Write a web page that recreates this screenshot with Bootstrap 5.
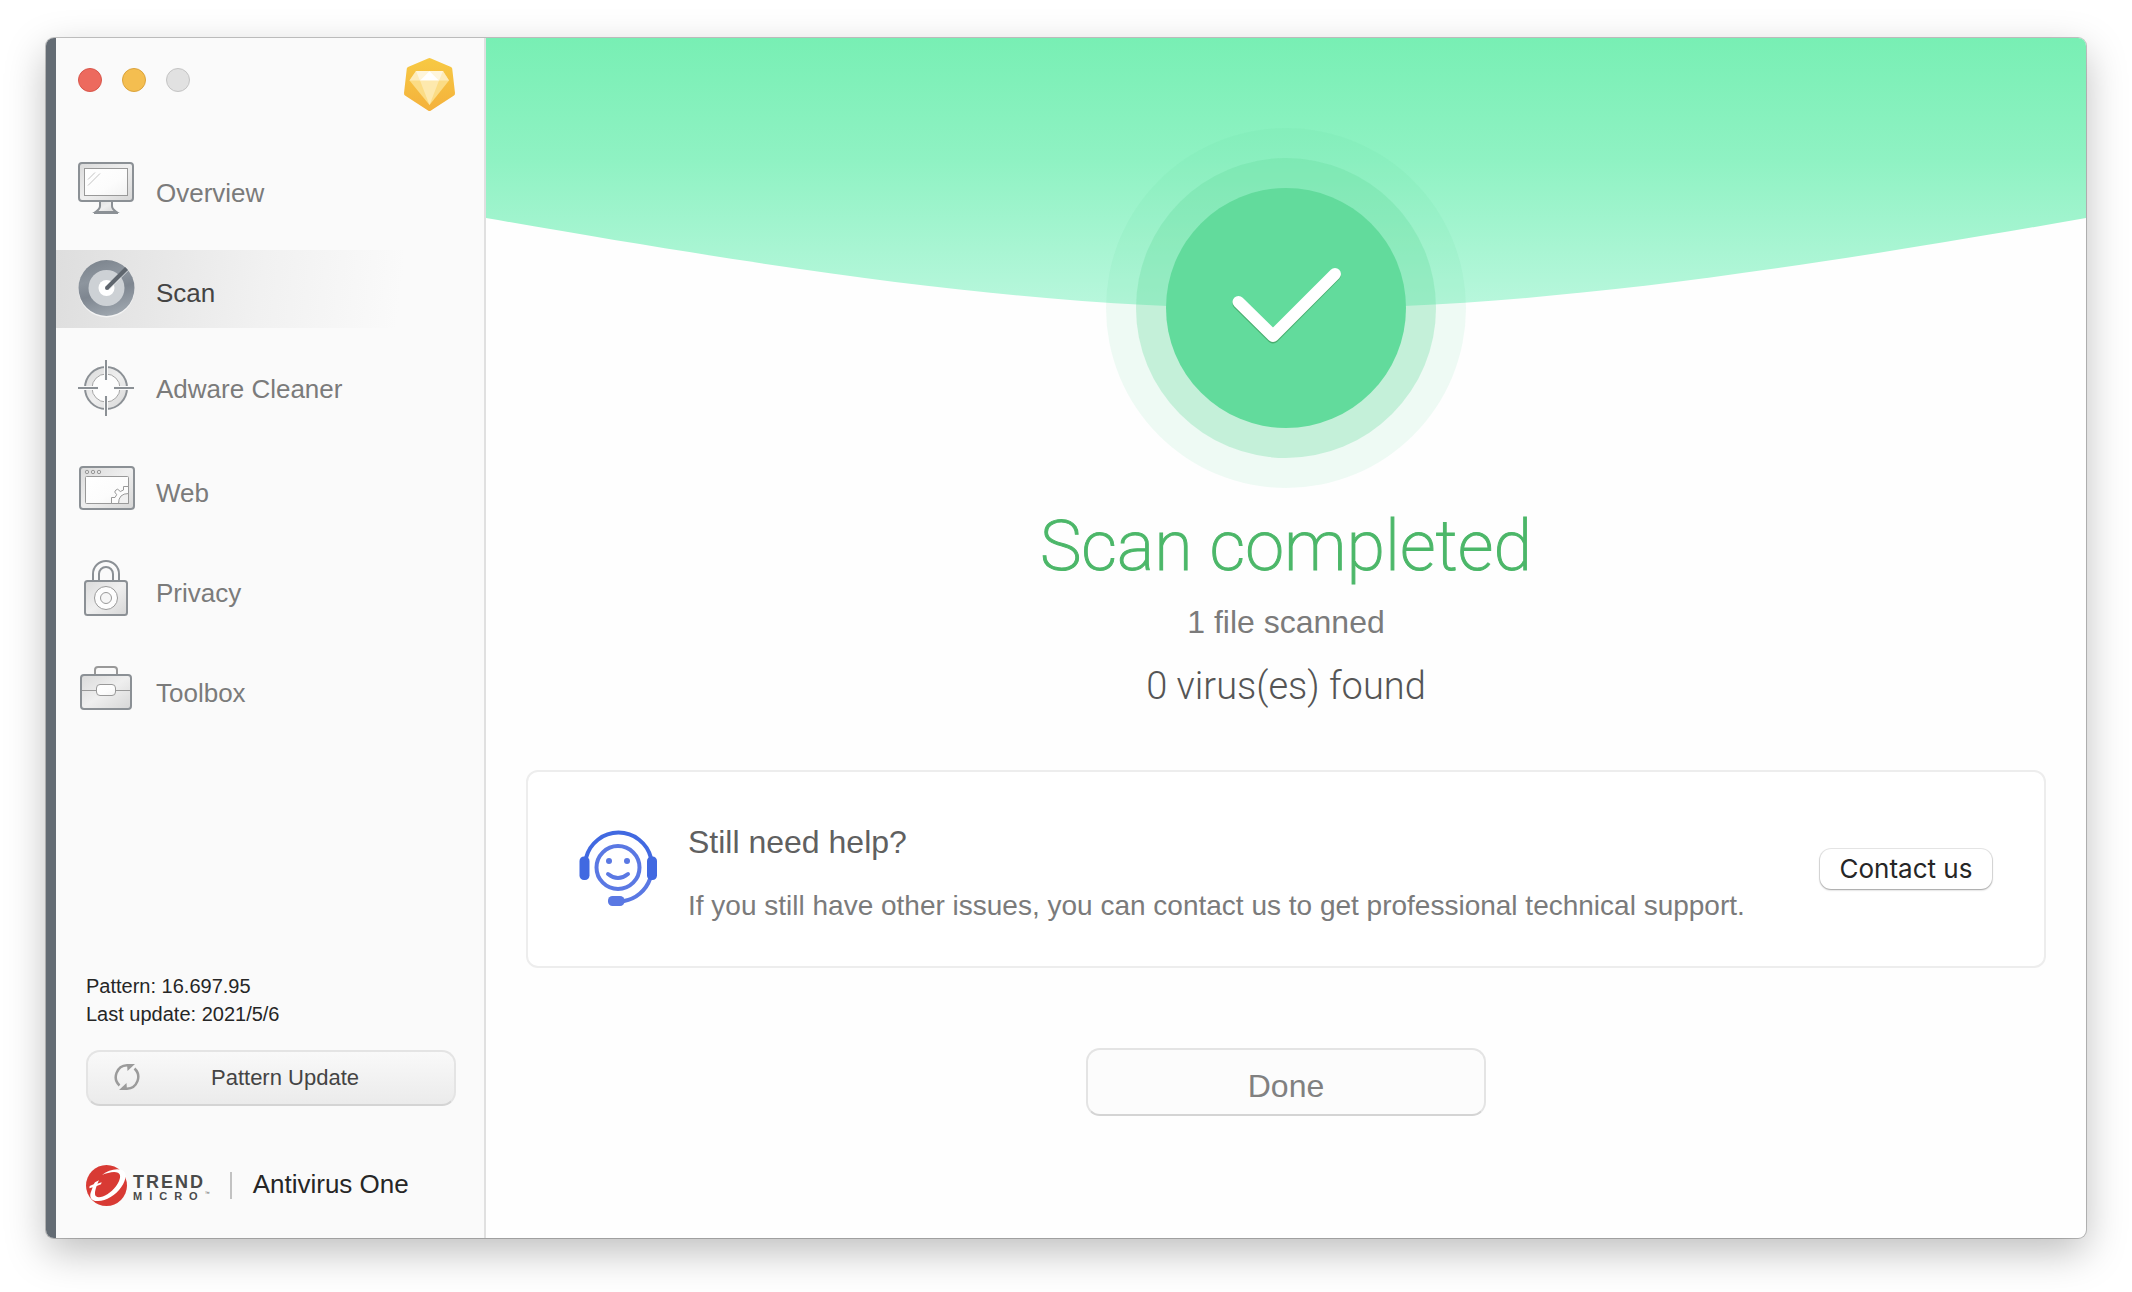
<!DOCTYPE html>
<html lang="en">
<head>
<meta charset="utf-8">
<meta name="viewport" content="width=device-width, initial-scale=1">
<title>Antivirus One</title>
<link href="https://cdn.jsdelivr.net/npm/bootstrap@5.3.0/dist/css/bootstrap.min.css" rel="stylesheet">
<style>
  body { font-family: "Liberation Sans", Arial, sans-serif; background: #fff; padding: 38px 46px 54px; }
  .app-window { border-radius: 8px; background: #fefefe; box-shadow: 0 0 0 1px rgba(0,0,0,.22), 0 14px 40px rgba(0,0,0,.26); }
  .edge-strip { width: 10px; background: #646c74; }
  .side-panel { width: 430px; background: #fafafa; border-right: 2px solid #e0e0e0; }
  .title-strip { height: 112px; padding: 20px 29px 0 22px; }
  .lights { padding-top: 10px; gap: 20px; }
  .light { width: 24px; height: 24px; border-radius: 50%; border: 1px solid #c4c4c4; background: #e1e1e1; padding: 0; }
  .light-close { background: #ed6a5e; border-color: #d8564b; }
  .light-min { background: #f4be50; border-color: #dba33c; }
  .side-nav { gap: 22px; }
  .side-nav .nav-link { height: 78px; padding: 0 22px; gap: 22px; color: #7b7b7b; font-size: 26px; line-height: 32px; }
  .side-nav .nav-link svg { margin-bottom: 2px; }
  .side-nav .nav-link.active { color: #444; background: linear-gradient(97deg, #dedede, #f1f1f1 48%, #fafafa 80%); }
  .side-foot { padding: 0 28px 32px 30px; }
  .version-info { font-size: 20px; line-height: 28px; color: #262626; }
  .soft-btn { border: 2px solid #e4e4e4; border-bottom-color: #d4d4d4; border-radius: 14px; }
  .update-btn { height: 56px; padding: 0 24px 2px 26px; margin-top: 22px; font-size: 22px; color: #444; background: linear-gradient(#f9f9f9, #ebebeb); }
  .brand-row { margin-top: 59px; height: 41px; }
  .brand-name { margin-left: 6px; }
  .brand-big { font-size: 18px; line-height: 18px; letter-spacing: 2px; color: #4a4a4a; }
  .brand-small { font-size: 11px; line-height: 11px; color: #4a4a4a; }
  .brand-wide { letter-spacing: 7px; }
  .brand-tm { font-size: 5px; line-height: 4px; }
  .brand-rule { width: 2px; height: 27px; background: #c2c2c2; margin-left: 20px; margin-right: 21px; }
  .product { font-size: 26px; line-height: 32px; color: #262626; }
  .main-pane { padding: 90px 40px 0; }
  .hero-wave { top: 0; left: 0; height: 272px; }
  .result-title { font-family: Roboto, "Liberation Sans", sans-serif; font-weight: 200; -webkit-text-stroke: 1px #4cb769; font-size: 70px; line-height: 80px; color: #4cb769; margin-top: 18px; }
  .result-files { font-size: 32px; line-height: 40px; color: #7b7b7b; margin-top: 16px; }
  .result-found { font-family: Roboto, "Liberation Sans", sans-serif; font-weight: 300; font-size: 38px; line-height: 48px; color: #555; margin-top: 20px; }
  .help-card { margin-top: 60px; border: 2px solid #ededed; border-radius: 12px; background: #fff; }
  .help-card .card-body { padding: 40px 52px; gap: 30px; }
  .help-text { padding-top: 10px; }
  .help-title { font-size: 32px; line-height: 40px; color: #606060; margin-bottom: 24px; }
  .help-desc { font-size: 28px; line-height: 40px; color: #7b7b7b; }
  .contact-btn { font-family: Inter, sans-serif; width: 172px; height: 40px; padding: 0; font-size: 26px; line-height: 36px; color: #262626; background: #fff; border: 0; border-radius: 11px; box-shadow: 0 0 0 1px rgba(0,0,0,.09), 0 1px 2px rgba(0,0,0,.32); }
  .done-btn { width: 400px; height: 68px; margin-top: 80px; padding: 8px 0 0; font-size: 32px; line-height: 40px; color: #808080; background: #fcfcfc; }
</style>
<script src="https://cdn.jsdelivr.net/npm/bootstrap@5.3.0/dist/js/bootstrap.bundle.min.js"></script>
</head>
<body class="min-vh-100 d-flex">
<svg width="0" height="0" class="position-absolute" aria-hidden="true">
  <defs>
    <linearGradient id="metal" x1="0" y1="0" x2="1" y2="1">
      <stop offset="0" stop-color="#dadada"/><stop offset=".5" stop-color="#efefef"/><stop offset="1" stop-color="#d6d6d6"/>
    </linearGradient>
    <linearGradient id="glass" x1="0" y1="0" x2="1" y2="1">
      <stop offset="0" stop-color="#fff"/><stop offset=".6" stop-color="#fcfcfc"/><stop offset="1" stop-color="#f2f2f2"/>
    </linearGradient>
    <linearGradient id="steel" x1=".2" y1="0" x2=".5" y2="1">
      <stop offset="0" stop-color="#7b838c"/><stop offset=".35" stop-color="#8d959e"/><stop offset=".6" stop-color="#7e8690"/><stop offset="1" stop-color="#9da5ad"/>
    </linearGradient>
  </defs>
</svg>

<div class="app-window d-flex flex-grow-1 overflow-hidden">
  <div class="edge-strip flex-shrink-0"></div>

  <aside class="side-panel d-flex flex-column flex-shrink-0">
    <div class="title-strip d-flex justify-content-between align-items-start">
      <div class="lights d-flex">
        <button type="button" class="light light-close" aria-label="Close"></button>
        <button type="button" class="light light-min" aria-label="Minimize"></button>
        <button type="button" class="light" aria-label="Zoom" disabled></button>
      </div>
      <svg width="51" height="54" viewBox="0 0 51 54" aria-hidden="true">
        <defs><linearGradient id="gold" x1="0" y1="0" x2="0" y2="1"><stop offset="0" stop-color="#f7c943"/><stop offset="1" stop-color="#f4b13c"/></linearGradient></defs>
        <path d="M24 .5 Q25.500 -.3 27 .5 L47 9 Q48 9.500 48.200 10.500 L51 35 Q51 37 50 37.500 L27 52.500 Q25.500 53.500 24 52.500 L1 37.500 Q0 37 0 35 L2.800 10.500 Q3 9.500 4 9 Z" fill="url(#gold)"/>
        <path d="M12 13 H39 L45 22.500 L25.500 47 L5.500 22.500 Z" fill="#fbdc85"/>
        <path d="M12 13 H39 L45 22.500 H5.500 Z" fill="#fdebb9"/>
        <path d="M16 22.500 H35 L25.500 47 Z" fill="#fde9ae"/>
        <path d="M12 13 H25.500 L16 22.500 Z M39 13 H25.500 L35 22.500 Z" fill="#fef5dc"/>
        <path d="M25.500 13 L35 22.500 H16 Z" fill="#fff"/>
      </svg>
    </div>

    <nav class="side-nav nav flex-column flex-nowrap" aria-label="Main">
      <a class="nav-link d-flex align-items-center" href="#">
        <svg width="56" height="56" viewBox="0 0 56 56" fill="none" stroke="#8b9095" aria-hidden="true">
          <path d="M22 40 V46 Q22 49 17.500 52 H38.500 Q34 49 34 46 V40" fill="url(#metal)" stroke-width="2"/>
          <path d="M16 53 H40" stroke-width="2"/>
          <rect x="1" y="3" width="54" height="38" rx="3" fill="url(#metal)" stroke-width="2"/>
          <rect x="6.500" y="8.500" width="43" height="27" fill="url(#glass)" stroke="#999" stroke-width="1"/>
          <path d="M10 19.500 L17 12.500 M10 25.500 L22 13.500" stroke="#c4c4c4"/>
        </svg>
        <span class="pt-2">Overview</span>
      </a>
      <a class="nav-link active d-flex align-items-center" href="#" aria-current="page">
        <svg width="56" height="56" viewBox="0 0 56 56" aria-hidden="true" overflow="visible">
          <circle cx="28.500" cy="29.500" r="28" fill="#f4f4f4"/>
          <circle cx="28.500" cy="28" r="28" fill="url(#steel)"/>
          <circle cx="28.500" cy="28" r="18" fill="#cdd1d5"/>
          <circle cx="28.500" cy="28" r="8" fill="#fff"/>
          <path d="M31 29.500 L50 10.500" stroke="#e6e8ea" stroke-width="1"/>
          <path d="M29 28 L48.500 8.500" stroke="#5f666e" stroke-width="4"/>
          <circle cx="29" cy="28" r="2" fill="#5f666e"/>
        </svg>
        <span class="pt-2">Scan</span>
      </a>
      <a class="nav-link d-flex align-items-center" href="#">
        <svg width="56" height="56" viewBox="0 0 56 56" fill="none" stroke="#8b9095" aria-hidden="true">
          <circle cx="28" cy="28" r="21" fill="url(#metal)" stroke-width="2"/>
          <circle cx="28" cy="28" r="14" fill="#fdfdfd" stroke="#a5a5a5"/>
          <path d="M28 5 V20 M28 36 V51 M5 28 H20 M36 28 H51" stroke="#fafafa" stroke-width="4"/>
          <path d="M28 0 V20 M28 36 V56 M0 28 H20 M36 28 H56" stroke-width="2"/>
        </svg>
        <span>Adware Cleaner</span>
      </a>
      <a class="nav-link d-flex align-items-center" href="#">
        <svg width="56" height="56" viewBox="0 0 56 56" overflow="visible" fill="none" stroke="#8b9095" aria-hidden="true">
          <rect x="2" y="7" width="54" height="42" rx="3" fill="url(#metal)" stroke-width="2"/>
          <g stroke="#999" stroke-width="1">
            <circle cx="9" cy="12" r="1.700"/><circle cx="15" cy="12" r="1.700"/><circle cx="21" cy="12" r="1.700"/>
            <rect x="7.500" y="16.500" width="43" height="27" rx="1" fill="url(#glass)"/>
            <path d="M33.500 43.500 V37.500 H37 L38.700 34.700 L36.700 32 Q37.500 29.500 39.700 29.200 L42.300 31.500 L45.500 30 V26.500 H50.500 V43.500 Z" fill="#fdfdfd"/>
            <path d="M40.500 43.500 Q40.500 33.500 50.500 33.500 V43.500 Z" fill="#f1f1f1"/>
          </g>
        </svg>
        <span class="pt-2">Web</span>
      </a>
      <a class="nav-link d-flex align-items-center" href="#">
        <svg width="56" height="56" viewBox="0 0 56 56" fill="none" stroke="#8b9095" stroke-width="2" aria-hidden="true">
          <path d="M15 21 V14 A13 13 0 0 1 41 14 V21 M21 21 V14 A7 7 0 0 1 35 14 V21"/>
          <rect x="7" y="21" width="42" height="34" rx="2.500" fill="url(#metal)"/>
          <circle cx="28" cy="38" r="11.500" fill="#fdfdfd" stroke="#999" stroke-width="1"/>
          <circle cx="28" cy="38" r="5.500" fill="#f6f6f6" stroke="#999" stroke-width="1"/>
        </svg>
        <span class="pt-2">Privacy</span>
      </a>
      <a class="nav-link d-flex align-items-center" href="#">
        <svg width="56" height="56" viewBox="0 0 56 56" fill="none" stroke="#8b9095" stroke-width="2" aria-hidden="true">
          <path d="M17 15 V10 Q17 7 20 7 H36 Q39 7 39 10 V15" stroke="#999"/>
          <rect x="3" y="15" width="50" height="34" rx="3" fill="url(#metal)"/>
          <path d="M4 30.500 H52" stroke="#999" stroke-width="1"/>
          <rect x="18.500" y="24.500" width="19" height="11" rx="3.500" fill="url(#glass)" stroke="#999" stroke-width="1"/>
        </svg>
        <span class="pt-2">Toolbox</span>
      </a>
    </nav>

    <div class="side-foot mt-auto">
      <div class="version-info">
        <div>Pattern: 16.697.95</div>
        <div>Last update: 2021/5/6</div>
      </div>
      <button type="button" class="btn soft-btn update-btn d-flex align-items-center w-100">
        <svg width="26" height="26" viewBox="0 0 26 26" fill="none" stroke="#9b9b9b" stroke-width="2.500" aria-hidden="true">
          <path d="M5.500 21.500 A11.700 11.700 0 0 1 13 1.300 H15"/>
          <path d="M20.500 4.500 A11.700 11.700 0 0 1 13 24.700 H11"/>
          <path d="M13 0 H21 L13.500 7 Z M13 26 H5 L12.500 19 Z" fill="#9b9b9b" stroke="none"/>
        </svg>
        <span class="flex-grow-1 text-center">Pattern Update</span>
      </button>
      <div class="brand-row d-flex align-items-center">
        <svg class="flex-shrink-0" width="41" height="41" viewBox="18 30 123 123" aria-hidden="true">
          <circle cx="79.500" cy="91.500" r="61.500" fill="#d83a34"/>
          <path d="M66 60 C85 45 110 38 128 46 C142 54 138 76 124 96 C106 122 76 140 50 138 C34 137 28 126 32 113 L38 97 L28 100 L29 93 L41 88 L45 82 L57 76 L52 86 L65 82 L63 88 L50 93 C46 104 42 118 48 124 C58 134 90 118 108 94 C122 74 124 58 114 53 C100 48 82 54 66 60 Z" fill="#fff"/>
        </svg>
        <div class="brand-name pt-1">
          <div class="brand-big fw-bold">TREND</div>
          <div class="brand-small fw-bold d-flex align-items-start"><span class="brand-wide">MICRO</span><span class="brand-tm fw-normal">™</span></div>
        </div>
        <div class="brand-rule"></div>
        <div class="product pb-1">Antivirus One</div>
      </div>
    </div>
  </aside>

  <main class="main-pane position-relative flex-grow-1 d-flex flex-column align-items-center">
    <svg class="hero-wave position-absolute w-100" viewBox="0 0 1600 272" preserveAspectRatio="none" aria-hidden="true">
      <defs><linearGradient id="mint" x1="0" y1="0" x2="0" y2="1"><stop offset="0" stop-color="#78efb4"/><stop offset=".45" stop-color="#8ff2c3"/><stop offset="1" stop-color="#b9f7dd"/></linearGradient></defs>
      <path d="M0 0 H1600 V180 C910 301 690 301 0 180 Z" fill="url(#mint)"/>
    </svg>
    <svg class="position-relative flex-shrink-0" width="360" height="360" viewBox="0 0 360 360" role="img" aria-label="Success">
      <circle cx="180" cy="180" r="180" fill="#63dc9d" fill-opacity=".1"/>
      <circle cx="180" cy="180" r="150" fill="#63dc9d" fill-opacity=".3"/>
      <circle cx="180" cy="180" r="120" fill="#62db9c"/>
      <g fill="none" stroke-width="12" stroke-linecap="round" stroke-linejoin="round">
        <path d="M132.500 175.500 L167 209.500 L229 147" stroke="#48ad6e"/>
        <path d="M132.500 174 L167 208 L229 146" stroke="#fff"/>
      </g>
    </svg>

    <h1 class="result-title mb-0">Scan completed</h1>
    <p class="result-files mb-0">1 file scanned</p>
    <p class="result-found mb-0">0 virus(es) found</p>

    <section class="help-card card w-100">
      <div class="card-body d-flex align-items-center">
        <svg class="flex-shrink-0" width="78" height="76" viewBox="0 0 78 76" overflow="visible" fill="none" stroke="#5a78e3" stroke-width="4" stroke-linecap="round" aria-hidden="true">
          <path d="M6 27 A33.500 33.500 0 0 1 71 27" stroke="#4169e1"/>
          <path d="M70 48 A34 34 0 0 1 44 70"/>
          <rect x="-.5" y="25.500" width="10" height="23.500" rx="4.500" fill="#4169e1" stroke="none"/>
          <rect x="67" y="25.500" width="10" height="23.500" rx="4.500" fill="#4169e1" stroke="none"/>
          <rect x="28" y="65" width="16.500" height="10" rx="4.500" fill="#5a78e3" stroke="none"/>
          <circle cx="38" cy="36.500" r="21.500"/>
          <circle cx="29" cy="30" r="3" fill="#5a78e3" stroke="none"/>
          <circle cx="47" cy="30" r="3" fill="#5a78e3" stroke="none"/>
          <path d="M28 43 Q38 51 48 43"/>
        </svg>
        <div class="help-text flex-grow-1">
          <h2 class="help-title fw-normal">Still need help?</h2>
          <p class="help-desc mb-0">If you still have other issues, you can contact us to get professional technical support.</p>
        </div>
        <button type="button" class="btn contact-btn flex-shrink-0">Contact us</button>
      </div>
    </section>

    <button type="button" class="btn soft-btn done-btn">Done</button>
  </main>
</div>
</body>
</html>
